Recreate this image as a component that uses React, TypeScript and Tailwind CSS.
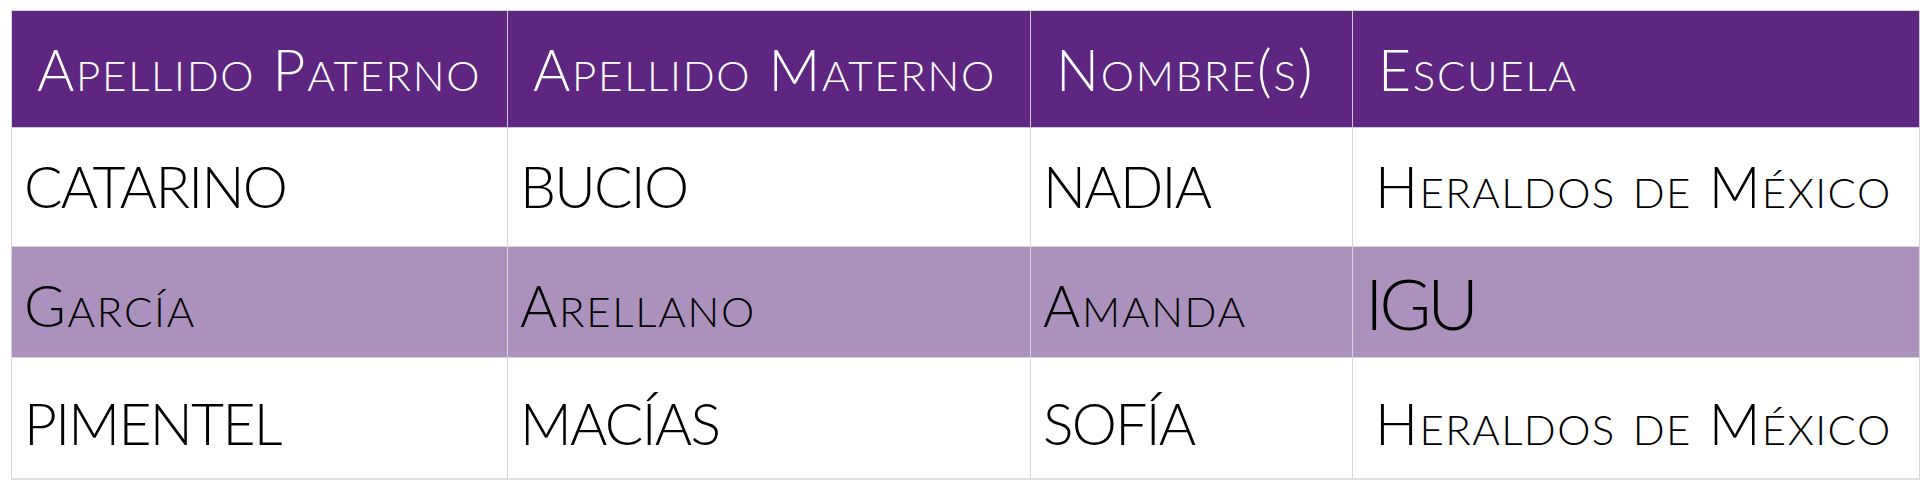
const header = ["Apellido Paterno", "Apellido Materno", "Nombre(s)", "Escuela"];

const rows = [
  { cells: ["CATARINO", "BUCIO", "NADIA", "Heraldos de México"], shaded: false, h: "h-[119px]", pt: "pt-[30px]" },
  { cells: ["García", "Arellano", "Amanda", "IGU"], shaded: true, h: "h-[111px]", pt: "pt-[30px]" },
  { cells: ["PIMENTEL", "MACÍAS", "SOFÍA", "Heraldos de México"], shaded: false, h: "h-[122px]", pt: "pt-[37px]" },
];

// hand-made small caps: lowercase letters become smaller capitals
function SmallCaps({ text }: { text: string }) {
  const parts: { s: string; lower: boolean }[] = [];
  for (const ch of text) {
    const lower = ch !== ch.toUpperCase();
    const last = parts[parts.length - 1];
    if (last && last.lower === lower) last.s += ch;
    else parts.push({ s: ch, lower });
  }
  return (
    <>
      {parts.map((p, i) =>
        p.lower ? (
          <span key={i} className="text-[42px]">
            {p.s.toUpperCase()}
          </span>
        ) : (
          <span key={i}>{p.s}</span>
        )
      )}
    </>
  );
}

function cellClass(text: string, ci: number) {
  if (text === "IGU") return "pl-[12px] pt-[20px] text-[71px] tracking-[-0.06em]";
  if (ci === 3) return "pl-[22px] text-[57px] tracking-[0.025em]";
  if (text !== text.toUpperCase()) return "pl-[12px] text-[57px] tracking-[0.03em]";
  return "pl-[12px] text-[57px] tracking-[-0.03em]";
}

export default function App() {
  return (
    <div className="min-h-screen bg-white pl-[11px] pt-[10px]">
      <div className="grid w-[1908px] grid-cols-[496px_523px_322px_567px] border-l border-t border-[#d6d6d6] font-['Lato','Open_Sans',sans-serif] font-light leading-none">
        {header.map((h) => (
          <div
            key={h}
            className="h-[117px] border-b border-r border-[#cfc6d6] bg-[#5e2680] pl-[25px] pt-[30px] text-[57px] tracking-[0.03em] text-white"
          >
            <SmallCaps text={h} />
          </div>
        ))}
        {rows.map((r, ri) =>
          r.cells.map((c, ci) => (
            <div
              key={`${ri}-${ci}`}
              className={`${r.h} ${c === "IGU" ? "" : r.pt} border-r border-[#d6d6d6] ${
                ri === rows.length - 1 ? "border-b-2 border-b-[#e0e0e0]" : "border-b"
              } ${r.shaded ? "bg-[#ac91be]" : "bg-white"} ${cellClass(c, ci)} text-black`}
            >
              <SmallCaps text={c} />
            </div>
          ))
        )}
      </div>
    </div>
  );
}
